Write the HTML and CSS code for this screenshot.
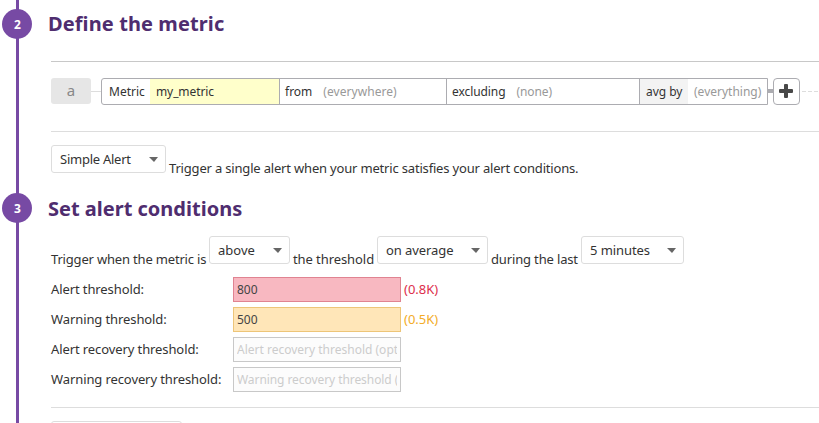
FILE: index.html
```html
<!DOCTYPE html>
<html lang="en">
<head>
<meta charset="utf-8">
<title>Monitor editor</title>
<link rel="stylesheet" href="styles.css">
</head>
<body>
<main class="steps">
  <section class="step">
    <div class="rail"><span class="badge">2</span></div>
    <div class="content">
      <h2 class="h-metric">Define the metric</h2>
      <div class="query">
        <span class="letter">a</span>
        <span class="link"></span>
        <div class="fields">
          <div class="field metric"><span class="name">Metric</span><span class="value">my_metric</span></div>
          <div class="field from"><span>from</span><span class="hint">(everywhere)</span></div>
          <div class="field excluding"><span>excluding</span><span class="hint">(none)</span></div>
          <div class="field by"><span class="agg">avg by</span><span class="hint">(everything)</span></div>
        </div>
        <span class="joint"></span>
        <button class="add" aria-label="Add"><svg width="14" height="14" viewBox="0 0 14 14"><path d="M5 1q0-1 1-1h2q1 0 1 1v4h4q1 0 1 1v2q0 1-1 1H9v4q0 1-1 1H6q-1 0-1-1V9H1Q0 9 0 8V6q0-1 1-1h4z"/></svg></button>
        <svg class="dashes" height="1" width="17"><path d="M0 .5H17"/></svg>
      </div>
      <div class="line">
        <div class="select kind">Simple Alert</div>
        <span class="text">Trigger a single alert when your metric satisfies your alert conditions.</span>
      </div>
    </div>
  </section>
  <section class="step">
    <div class="rail"><span class="badge">3</span></div>
    <div class="content">
      <h2 class="h-alert">Set alert conditions</h2>
      <div class="line trigger">
        <span class="text t1">Trigger when the metric is</span>
        <div class="select s1">above</div>
        <span class="text t2">the threshold</span>
        <div class="select s2">on average</div>
        <span class="text t3">during the last</span>
        <div class="select s3">5 minutes</div>
      </div>
      <div class="thresholds">
        <label for="alert">Alert threshold:</label><input id="alert" class="alert" value="800"><span class="alert-note">(0.8K)</span>
        <label for="warn">Warning threshold:</label><input id="warn" class="warn" value="500"><span class="warn-note">(0.5K)</span>
        <label for="alert-rec">Alert recovery threshold:</label><input id="alert-rec" placeholder="Alert recovery threshold (optional)"><span></span>
        <label for="warn-rec">Warning recovery threshold:</label><input id="warn-rec" class="tight" placeholder="Warning recovery threshold (optional)"><span></span>
      </div>
      <div class="next"><div class="select more"></div></div>
    </div>
  </section>
</main>
</body>
</html>
```
FILE: styles.css
```css
* { box-sizing: border-box; }
body {
  margin: 0;
  background: #fff;
  color: #333;
  font: 13px/18px "Noto Sans", sans-serif;
}
.steps { height: 423px; overflow: hidden; }
.step { display: grid; grid-template-columns: 51px 1fr; height: 184px; }
.step + .step { height: 239px; }
.rail {
  padding: 9px 0 0 2px;
  background: linear-gradient(#774aa4, #774aa4) 16px 0 / 3px 100% no-repeat;
}
.badge {
  display: block;
  width: 30px;
  height: 30px;
  padding-left: 1px;
  border-radius: 50%;
  background: #774aa4;
  color: #fff;
  font-size: 12px;
  font-weight: 700;
  line-height: 31px;
  text-align: center;
}
.content { min-width: 0; }
h2 {
  margin: 9px 0 0 -3px;
  color: #4f2d6f;
  font-size: 20px;
  font-weight: 700;
  line-height: 30px;
}
.h-metric { letter-spacing: .1px; }
.h-alert { margin-top: 10px; }
.query {
  display: flex;
  align-items: center;
  height: 71px;
  margin-top: 22px;
  padding-bottom: 10px;
  border-top: 1px solid #c8c8c8;
  border-bottom: 1px solid #ddd;
  font-size: 12px;
}
.letter {
  width: 40px;
  height: 26px;
  margin-bottom: 1px;
  border-radius: 3px;
  background: #e6e6e6;
  color: #888;
  font-size: 15px;
  line-height: 25px;
  text-align: center;
}
.link { width: 10px; height: 1px; background: #ddd; }
.fields {
  display: flex;
  height: 27px;
  border: 1px solid #acacb1;
  border-radius: 3px 0 0 3px;
  line-height: 25px;
  white-space: nowrap;
}
.field { display: flex; }
.field + .field { border-left: 1px solid #acacb1; }
.hint { color: #999; }
.metric { width: 177px; }
.name { width: 48px; padding-left: 7px; }
.value { flex: 1; padding-left: 6px; background: #ffffcb; letter-spacing: -.1px; }
.from { width: 167px; padding-left: 5px; }
.from .hint { margin-left: 11px; letter-spacing: .05px; }
.excluding { width: 193px; padding-left: 5px; letter-spacing: -.08px; }
.excluding .hint { margin-left: 11px; }
.by { width: 128px; }
.agg { width: 48px; padding-left: 6px; background: #f3f3f3; letter-spacing: -.05px; }
.by .hint { margin-left: 6px; }
.joint { width: 5px; height: 4px; margin-bottom: 1px; background: #acacb1; }
.add {
  display: flex;
  align-items: center;
  justify-content: center;
  width: 27px;
  height: 27px;
  padding: 0 1px 1px 0;
  border: 1px solid #acacb1;
  border-radius: 4px;
  background: #fff;
  fill: #484848;
}
.dashes { margin-left: 2px; stroke: #ddd; stroke-dasharray: 4 2; }
.line { display: flex; gap: 3px; margin-top: 13px; white-space: nowrap; }
.text { padding-top: 14px; letter-spacing: -.18px; }
.select {
  position: relative;
  height: 28px;
  padding-left: 8px;
  border: 1px solid #ddd;
  border-radius: 3px;
  line-height: 26px;
  letter-spacing: -.08px;
}
.select::after {
  content: "";
  position: absolute;
  top: 11px;
  right: 7px;
  border: solid transparent;
  border-width: 5px 4.5px 0 5px;
  border-top-color: #666;
}
.kind { width: 115px; letter-spacing: -.25px; }
.trigger { gap: 0; margin-top: 12px; }
.t1 { width: 158px; }
.s1 { width: 81px; letter-spacing: 0; }
.t2 { width: 87px; padding-left: 3px; letter-spacing: -.08px; }
.s2 { width: 111px; }
.t3 { width: 93px; padding-left: 3px; letter-spacing: -.15px; }
.s3 { width: 103px; }
.thresholds {
  display: grid;
  grid-template-columns: 182px 168px 1fr;
  grid-auto-rows: 25px;
  row-gap: 5px;
  margin-top: 9px;
  line-height: 25px;
}
label { letter-spacing: -.1px; }
input {
  width: 168px;
  height: 25px;
  padding: 0 3px;
  border: 1px solid #c8c8c8;
  border-radius: 0;
  background: #fcfcfc;
  color: #444;
  font: 12px "Noto Sans", sans-serif;
}
input::placeholder { color: #ccc; }
.tight { letter-spacing: -.07px; }
.alert { border-color: #e08391; background: #f8b8c1; }
.warn { border-color: #edc578; background: #ffe6b8; }
.alert-note, .warn-note { padding-left: 3px; }
.alert-note { color: #dd2f4b; }
.warn-note { color: #f3ac27; }
.next { margin-top: 15px; padding-top: 13px; border-top: 1px solid #ddd; }
.more { width: 131px; }
```
